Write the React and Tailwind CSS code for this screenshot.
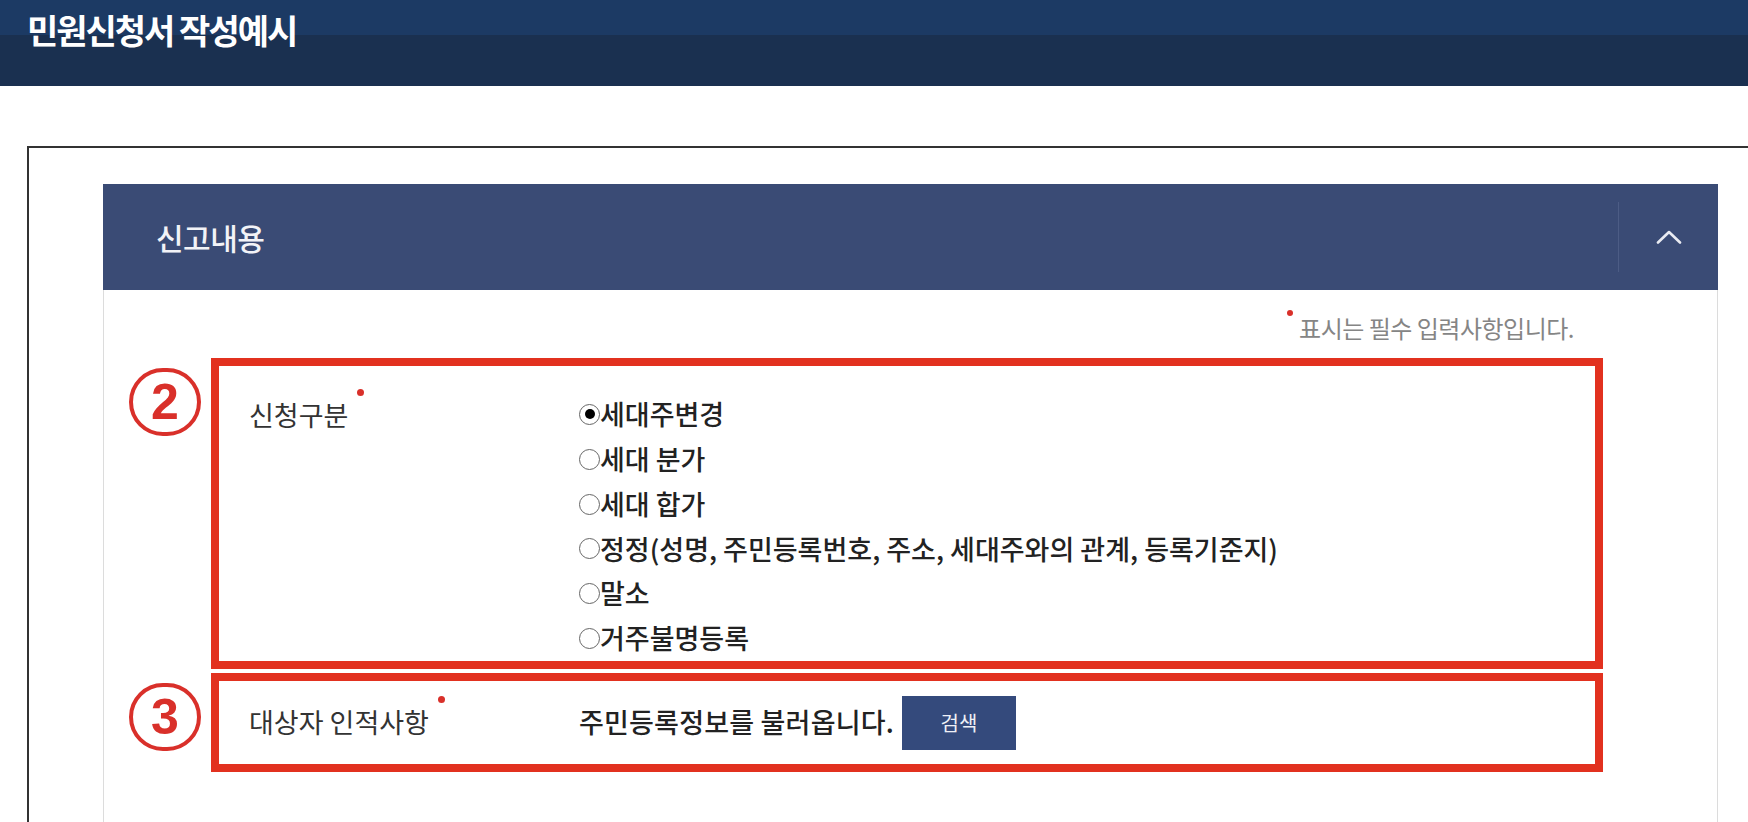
import React from "react";

const options = [
    { label: "세대주변경", checked: true },
    { label: "세대 분가" },
    { label: "세대 합가" },
    { label: "정정(성명, 주민등록번호, 주소, 세대주와의 관계, 등록기준지)" },
    { label: "말소" },
    { label: "거주불명등록" },
];

const Required = () => (
    <span className="absolute -right-[16px] -top-[6px] w-[7px] h-[7px] rounded-full bg-[#d9302a]" />
);

const Circle = ({ n }) => (
    <div className="w-[72px] h-[68px] mt-[10px] shrink-0 rounded-full border-[4px] border-[#d9302a] flex items-center justify-center">
        <span className="font-['Liberation_Sans',sans-serif] font-bold text-[50px] leading-none text-[#d9302a]">{n}</span>
    </div>
);

const Radio = ({ checked }) => (
    <span className="w-[21px] h-[21px] rounded-full border-[1.5px] border-[#666] flex items-center justify-center shrink-0">
        {checked && <span className="w-[10px] h-[10px] rounded-full bg-black" />}
    </span>
);

const App = () => {
    return (
        <div className="w-full h-[822px] overflow-hidden bg-white flex flex-col font-['Noto_Sans_CJK_KR','Noto_Sans',sans-serif]">
            {/* title bar */}
            <div className="h-[86px] shrink-0 bg-[linear-gradient(to_bottom,#1c3a64_0px,#1c3a64_35px,#1a3050_35px,#1a3050_100%)] pl-[27px] pt-[13px]">
                <h1 className="text-white font-bold text-[34px] leading-none tracking-[-2px]">민원신청서 작성예시</h1>
            </div>

            <div className="flex-1 pt-[60px] pl-[27px]">
                <div className="h-full border-t-2 border-l-2 border-[#333] pl-[74px] pt-[36px]">
                    <div className="w-[1615px] h-full flex flex-col">
                        {/* panel header */}
                        <div className="h-[106px] shrink-0 bg-[#3a4b75] flex items-center">
                            <div className="flex-1 pl-[53px] text-[30px] font-medium text-[#f2f3f7] tracking-[-0.5px]">신고내용</div>
                            <div className="w-px h-[70px] bg-[#4c5c85]" />
                            <div className="w-[99px] flex items-center justify-center">
                                <svg width="26" height="14" viewBox="0 0 26 14" fill="none">
                                    <polyline points="2,12.5 13,2 24,12.5" stroke="#e9ebf2" strokeWidth="2.6" strokeLinecap="round" strokeLinejoin="round" />
                                </svg>
                            </div>
                        </div>

                        {/* panel body */}
                        <div className="flex-1 border-l border-r border-[#dcdcdc]">
                            <div className="flex justify-end pr-[143px] pt-[26px] h-[68px]">
                                <span className="relative text-[24px] leading-none text-[#858585] tracking-[-0.5px]">
                                    <span className="absolute -left-[12px] -top-[6px] w-[6px] h-[6px] rounded-full bg-[#d9302a]" />
                                    표시는 필수 입력사항입니다.
                                </span>
                            </div>

                            <div className="flex flex-col gap-[4px] pl-[25px]">
                                <div className="flex gap-[10px]">
                                    <Circle n="2" />
                                    <div className="w-[1392px] h-[311px] border-[8px] border-[#e2311f] flex pl-[30px] pt-[26px]">
                                        <div className="w-[330px] shrink-0 text-[27px] leading-[45px] text-[#333]">
                                            <span className="relative">
                                                신청구분
                                                <Required />
                                            </span>
                                        </div>
                                        <div className="flex flex-col">
                                            {options.map((o) => (
                                                <div key={o.label} className="h-[45px] flex items-center text-[27px] font-medium text-[#222]">
                                                    <Radio checked={o.checked} />
                                                    {o.label}
                                                </div>
                                            ))}
                                        </div>
                                    </div>
                                </div>

                                <div className="flex gap-[10px]">
                                    <Circle n="3" />
                                    <div className="w-[1392px] h-[99px] border-[8px] border-[#e2311f] flex items-center pl-[30px]">
                                        <div className="w-[330px] shrink-0 text-[27px] text-[#333]">
                                            <span className="relative">
                                                대상자 인적사항
                                                <Required />
                                            </span>
                                        </div>
                                        <span className="text-[27px] font-medium text-[#222] tracking-[0.2px]">주민등록정보를 불러옵니다.</span>
                                        <button className="ml-[8px] w-[114px] h-[54px] bg-[#344a7c] text-[#eef0f6] text-[20px]">검색</button>
                                    </div>
                                </div>
                            </div>
                        </div>
                    </div>
                </div>
            </div>
        </div>
    );
};

export default App;
